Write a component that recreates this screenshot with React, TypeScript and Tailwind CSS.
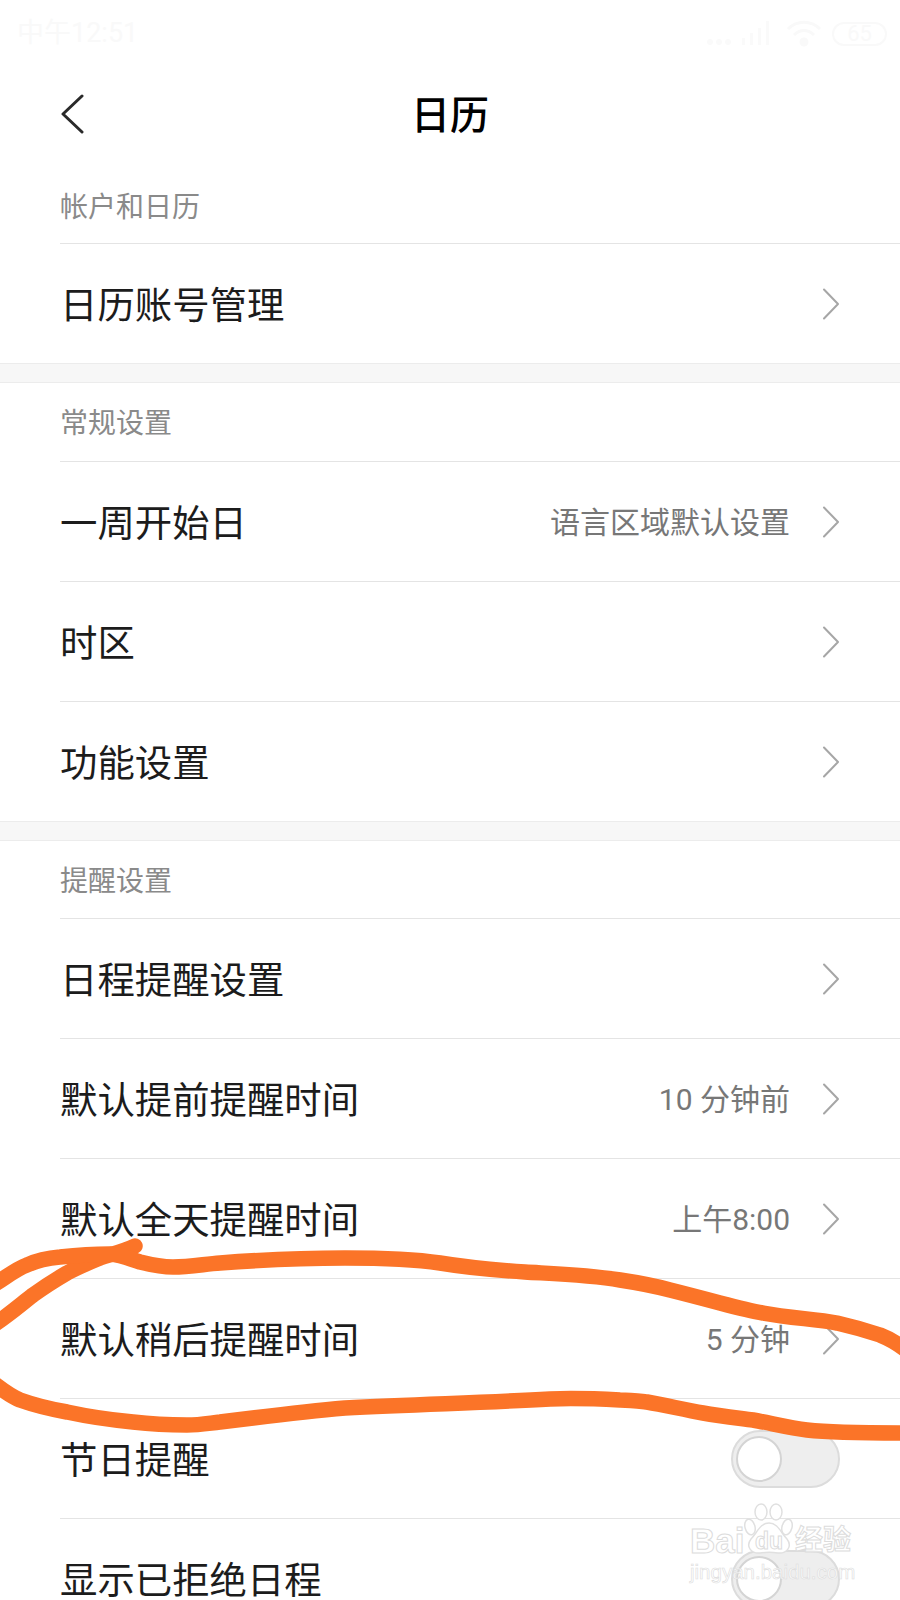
const font = { fontFamily: 'Roboto, "Noto Sans CJK SC", "Noto Sans", sans-serif' };
const latin = { fontFamily: '"Liberation Sans", sans-serif' };

function Chevron() {
  return (
    <svg width="18" height="32" viewBox="0 0 18 32" fill="none" className="ml-[32px] shrink-0">
      <path d="M2 1.5 L16 16 L2 30.5" stroke="#a6a6a6" strokeWidth="2" strokeLinecap="round" strokeLinejoin="round" />
    </svg>
  );
}

function Toggle() {
  return (
    <div className="flex h-[58px] w-[109px] shrink-0 items-center rounded-full border-2 border-[#dcdcdc] bg-[#eeeeee] pl-[3px]">
      <div className="h-[46px] w-[46px] rounded-full border-2 border-[#d4d4d4] bg-white" />
    </div>
  );
}

function Row({ title, value, toggle }: { title: string; value?: string; toggle?: boolean }) {
  return (
    <div className="flex h-[120px] items-center border-t border-[#e4e4e4] pr-[60px]">
      <span className="flex-1 pt-[6px] text-[37.4px] leading-none text-[#1c1c1c]">{title}</span>
      {value && <span className="pt-[2px] text-[30px] leading-none text-[#777777]">{value}</span>}
      {toggle ? <Toggle /> : <Chevron />}
    </div>
  );
}

function SectionHeader({ children, className }: { children: string; className: string }) {
  return <div className={`flex items-center pt-[4px] text-[28px] leading-none text-[#8a8a8a] ${className}`}>{children}</div>;
}

function Gap() {
  return <div className="h-[20px] border-y border-[#ececec] bg-[#f7f7f7]" />;
}

function StatusBar() {
  return (
    <div className="flex h-[57px] items-center justify-between pl-[17px] pr-[13px] pt-[10px] text-[#f9f9f9]">
      <span className="text-[27px] leading-none">中午12:51</span>
      <div className="flex items-center gap-[10px]">
        <svg width="70" height="30" viewBox="0 0 70 30" fill="#fafafa">
          <circle cx="4" cy="23" r="3" />
          <circle cx="13" cy="23" r="3" />
          <circle cx="22" cy="23" r="3" />
          <rect x="36" y="19" width="3" height="7" />
          <rect x="44" y="14" width="3" height="12" />
          <rect x="52" y="9" width="3" height="17" />
          <rect x="60" y="2" width="3" height="24" />
        </svg>
        <svg width="36" height="30" viewBox="0 0 36 30" fill="none" stroke="#f9f9f9" strokeWidth="3">
          <path d="M2 10 C11 1 25 1 34 10" />
          <path d="M8 16 C14 10 22 10 28 16" />
          <circle cx="18" cy="23" r="3" fill="#f9f9f9" />
        </svg>
        <div className="flex h-[24px] w-[55px] items-center justify-center rounded-full border-2 border-[#f9f9f9] text-[22px] leading-none">
          65
        </div>
      </div>
    </div>
  );
}

function NavBar() {
  return (
    <div className="relative flex h-[116px] items-center justify-center pt-[2px]">
      <svg width="24" height="40" viewBox="0 0 24 40" fill="none" className="absolute left-[60px] top-[37px]">
        <path d="M22 2 L3 20 L22 38" stroke="#2a2a2a" strokeWidth="3" strokeLinecap="round" strokeLinejoin="round" />
      </svg>
      <span className="text-[39px] font-medium leading-none text-black">日历</span>
    </div>
  );
}

function Scribble() {
  return (
    <svg width="900" height="1600" viewBox="0 0 900 1600" fill="none" className="absolute left-0 top-0">
      <g stroke="#fb7428" strokeWidth="15.5" strokeLinecap="round" strokeLinejoin="round">
        <path d="M135 1246 C122 1252 112 1254 100 1258 C88 1263 78 1267 67 1273 C55 1280 44 1287 33 1295 C20 1305 10 1314 -8 1326" />
        <path d="M-8 1286 C8 1276 16 1269 27 1265 C38 1260 48 1258 60 1257 C78 1255 92 1254 110 1254 C122 1255 130 1259 140 1262 C152 1265 162 1267 173 1267 C190 1267 205 1264 220 1263 C260 1260 300 1258 345 1258 C395 1258 420 1260 440 1263 C470 1268 495 1270 525 1272 C560 1274 590 1275 620 1280 C640 1283 655 1286 670 1290 C690 1295 705 1299 720 1303 C735 1307 750 1311 763 1313 C790 1318 815 1319 837 1323 C850 1326 865 1330 880 1335 C890 1339 897 1343 906 1350" />
        <path d="M-8 1382 C4 1391 10 1396 20 1400 C34 1405 50 1409 67 1412 C90 1417 112 1420 133 1422 C150 1424 170 1425 187 1425 C200 1425 210 1423 220 1422 C260 1417 300 1412 345 1408 C420 1404 480 1403 550 1399 C575 1398 600 1399 620 1400 C630 1400 638 1401 647 1402 C665 1405 685 1410 703 1413 C720 1416 738 1418 753 1420 C770 1423 790 1428 807 1430 C835 1433 870 1433 906 1433" />
      </g>
    </svg>
  );
}

const hollow = "text-white/70 [-webkit-text-stroke:1px_#dcdcdc] font-bold leading-none";

function Watermark() {
  return (
    <div className="absolute left-[690px] top-[1503px] h-[78px] w-[165px]">
      <svg width="50" height="52" viewBox="0 0 50 52" fill="#ffffff" stroke="#e0e0e0" strokeWidth="1.5" className="absolute left-[54px] top-0">
        <ellipse cx="6" cy="24" rx="5" ry="8" transform="rotate(-15 6 24)" />
        <ellipse cx="17" cy="9" rx="6" ry="8" />
        <ellipse cx="32" cy="9" rx="6" ry="8" />
        <ellipse cx="43" cy="24" rx="5" ry="8" transform="rotate(15 43 24)" />
        <path d="M25 20 C16 20 13 30 7 36 C1 44 8 51 16 50 C22 49 28 49 34 50 C42 51 49 44 43 36 C37 30 34 20 25 20 Z" />
      </svg>
      <span className={`absolute left-0 top-[20px] text-[35px] ${hollow}`} style={latin}>Bai</span>
      <span className={`absolute left-[65px] top-[27px] text-[23px] ${hollow}`} style={latin}>du</span>
      <span className={`absolute left-[105px] top-[24px] text-[28px] ${hollow}`}>经验</span>
      <span className="absolute left-0 top-[59px] text-[20.5px] leading-none text-white/70 [-webkit-text-stroke:0.6px_#dcdcdc]" style={latin}>
        jingyan.baidu.com
      </span>
    </div>
  );
}

export default function App() {
  return (
    <div className="relative h-[1600px] w-[900px] overflow-hidden bg-white" style={font}>
      <StatusBar />
      <NavBar />
      <div className="pl-[60px]">
        <div className="flex h-[70px] items-center text-[28px] leading-none text-[#8a8a8a]">帐户和日历</div>
        <Row title="日历账号管理" />
      </div>
      <Gap />
      <div className="pl-[60px]">
        <SectionHeader className="h-[78px]">常规设置</SectionHeader>
        <Row title="一周开始日" value="语言区域默认设置" />
        <Row title="时区" />
        <Row title="功能设置" />
      </div>
      <Gap />
      <div className="pl-[60px]">
        <SectionHeader className="h-[77px]">提醒设置</SectionHeader>
        <Row title="日程提醒设置" />
        <Row title="默认提前提醒时间" value="10 分钟前" />
        <Row title="默认全天提醒时间" value="上午8:00" />
        <Row title="默认稍后提醒时间" value="5 分钟" />
        <Row title="节日提醒" toggle />
        <Row title="显示已拒绝日程" toggle />
      </div>
      <Scribble />
      <Watermark />
    </div>
  );
}
